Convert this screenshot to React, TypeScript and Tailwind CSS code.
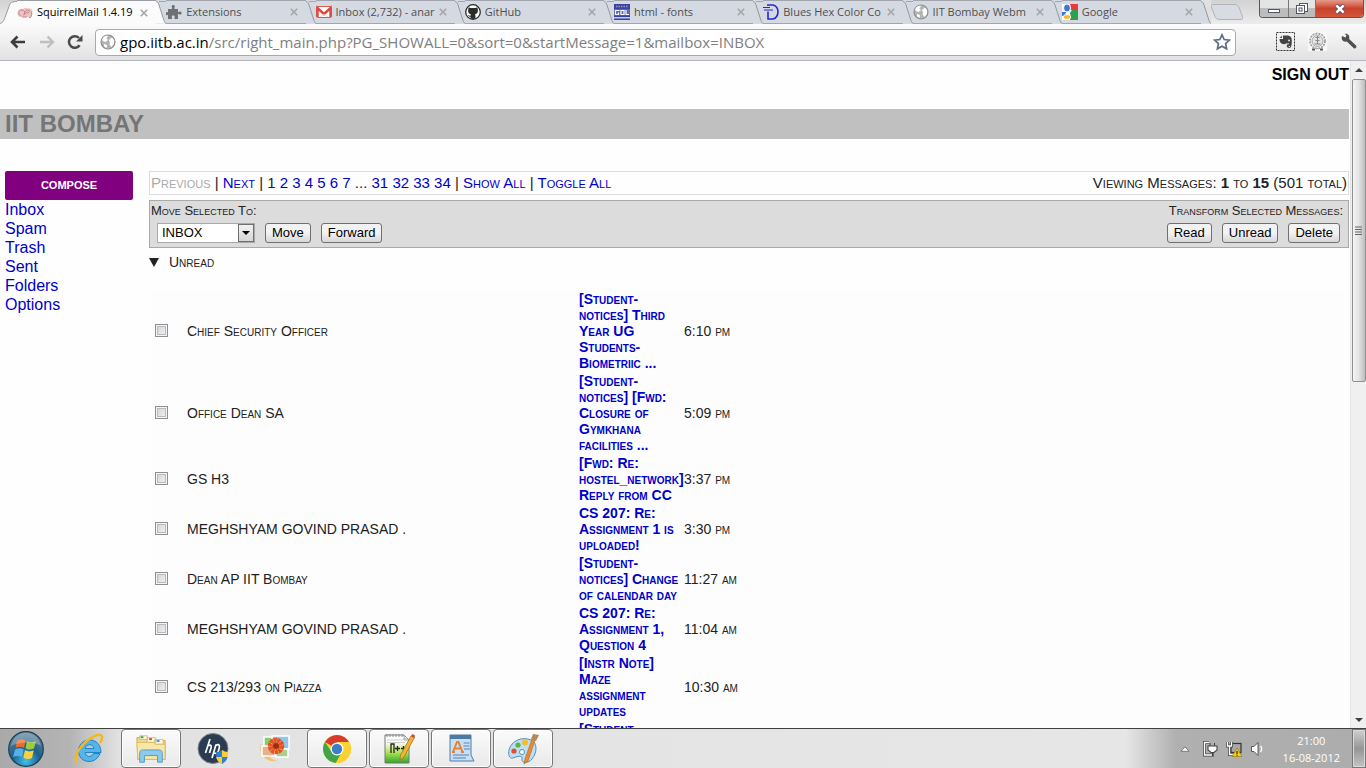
import React from "react";

type IconProps = { className?: string };

function SquirrelIcon() {
  return (
    <svg viewBox="0 0 16 16" className="size-4 shrink-0" aria-hidden="true">
      <path d="M0.500 8c0-3 2.500-5 6-4 1-1.500 3-1.500 4-.5 3-1 5 1 5 3.500s-1 4-2 5H3C1 11 .5 10 .5 8z" fill="#ecc3c4" />
      <path d="M4 11c-4-2-2-6 1-6s4 4 1 5M7.500 10c1-1-.5-3 1.500-4.500s4 0 3 1.500-3 1-3 0M12 12.500h1.500c1.500-2 1.500-4.500.5-6M5 12h5" fill="none" stroke="#c07f85" strokeWidth="0.900" />
    </svg>
  );
}

function PuzzleIcon() {
  return (
    <svg viewBox="0 0 16 16" className="size-4 shrink-0" fill="#6e7073" aria-hidden="true">
      <path d="M2 5h4V3.500C5 2 6 1 7.200 1S9.500 2 8.500 3.500V5H12v3h1c1-1.200 2.600-.5 2.600 1S14 11.200 13 10h-1v5H8.500v-1.500c.8-1.500-.3-2-1.300-2s-2 .6-1.200 2V15H2v-4H1.200C.4 12 0 11 0 9.500S.8 7.500 1.400 8.300H2z" />
    </svg>
  );
}

function GmailIcon() {
  return (
    <svg viewBox="0 0 16 16" className="size-4 shrink-0" aria-hidden="true">
      <rect x="0.500" y="2.500" width="15" height="11" rx="1" fill="#fff" stroke="#dd5a50" />
      <path d="M1.500 13V4L8 10l6.500-6v9" fill="none" stroke="#dc4b41" strokeWidth="2.400" />
      <path d="M4 13l4-3 4 3" fill="none" stroke="#ecc4c0" strokeWidth="0.800" />
    </svg>
  );
}

function GithubIcon() {
  return (
    <svg viewBox="0 0 16 16" className="size-4 shrink-0" aria-hidden="true">
      <circle cx="8" cy="8" r="7.300" fill="#fff" stroke="#2b2b2b" strokeWidth="1.300" />
      <path d="M3.500 3.200l2 .8h5l2-.8.4 3.500c0 2.400-1.400 3.300-3 3.600.7.700.6 2 .6 4.200-1 .5-4 .5-5 0v-1.700c-1.800.3-2-1.300-2.800-1.800 1.300-.3 1.500 1 2.800.8 0-.8.200-1.200.6-1.500-1.700-.3-3-1.200-3-3.600z" fill="#2b2b2b" />
    </svg>
  );
}

function GdlIcon() {
  return (
    <svg viewBox="0 0 16 16" className="size-4 shrink-0" aria-hidden="true">
      <path d="M0 0h16v16H0z" fill="#3a449c" />
      <path d="M0 5h16v6.500H0z" fill="#5d68b3" />
      <path d="M0 13h16v1.500H0z" fill="#c3c8ec" />
      <path d="M2 2.500h12" stroke="#8f98d6" strokeWidth="1.500" strokeDasharray="1.500 1" />
      <path d="M5.500 6.500h-4v4h3v-2M7 6.500h3v4H7zM12 6v4.500h3" fill="none" stroke="#fff" strokeWidth="1.200" />
    </svg>
  );
}

function DynamicIcon() {
  return (
    <svg viewBox="0 0 16 16" className="size-4 shrink-0" fill="none" stroke="#2424e0" aria-hidden="true">
      <path d="M4 1h6c4 1 5 4 5 7s-2 6.500-5 7H5V7.500" strokeWidth="1.600" />
      <path d="M0 3.500h7M1 6h9" strokeWidth="1.200" />
    </svg>
  );
}

function GlobeIcon() {
  return (
    <svg viewBox="0 0 16 16" className="size-4 shrink-0" aria-hidden="true">
      <circle cx="8" cy="8" r="7" fill="#b4b4b4" stroke="#8f8f8f" strokeWidth="1.200" />
      <path d="M3 3.500c2-2 4-2 5-1.500L6.500 4.500 8 6 5.500 8 4 7.500 2 6zM9 6l3-2.500 2 2.500v4l-2.500 3-2-2.500L10 9zM4 10l3 1-.5 3L4 12.500z" fill="#fff" />
    </svg>
  );
}

function GoogleIcon() {
  return (
    <svg viewBox="0 0 16 16" className="size-4 shrink-0" aria-hidden="true">
      <path d="M0 0h16v16H0z" fill="#fff" />
      <path d="M8 0h8v6H9z" fill="#ee3a32" />
      <path d="M10 6h6v10H8V9z" fill="#2f9e52" />
      <path d="M0 8h4v4H0z" fill="#3b78d8" />
      <ellipse cx="5" cy="4" rx="3.500" ry="4" fill="#3b78d8" stroke="#fff" />
      <path d="M5 8l4 3-3 1-3-2z" fill="#fff" />
      <ellipse cx="5" cy="13" rx="3.800" ry="2.500" fill="#f5b82e" stroke="#fff" />
    </svg>
  );
}

const tabs = [
  { title: "SquirrelMail 1.4.19", Icon: SquirrelIcon },
  { title: "Extensions", Icon: PuzzleIcon },
  { title: "Inbox (2,732) - anar", Icon: GmailIcon },
  { title: "GitHub", Icon: GithubIcon },
  { title: "html - fonts", Icon: GdlIcon },
  { title: "Blues Hex Color Co", Icon: DynamicIcon },
  { title: "IIT Bombay Webm", Icon: GlobeIcon },
  { title: "Google", Icon: GoogleIcon },
];

function TabStrip() {
  return (
    <div className="flex h-6 items-stretch bg-linear-to-b from-[#d2d2d2] to-[#ececec]">
      <svg viewBox="0 0 17 24" className="h-6 w-[17px] shrink-0" aria-hidden="true">
        <path d="M0 24c3-1 4-4 5-7l4-10c1-4 3-5 8-5v22z" fill="#fbfbfb" />
        <path d="M0 23.500c3-1 4-3 5-6l4-11c1-4 3-5 8-5" fill="none" stroke="#9a9da2" />
      </svg>
      <div role="tablist" className="flex min-w-0 max-w-[1194px] flex-1">
        {tabs.map(({ title, Icon }, i) => {
          const active = i === 0;
          const last = i === tabs.length - 1;
          return (
            <div key={title} className="flex min-w-0 flex-1 basis-0">
              <div
                className={
                  active
                    ? "flex min-w-0 flex-1 items-center border-t border-[#9a9da2] bg-[#fbfbfb] text-black"
                    : "flex min-w-0 flex-1 items-center border-y border-[#a0a5ae] bg-[#d5dae2] text-[#4e4e4e]"
                }
              >
                <button role="tab" aria-selected={active} className="flex min-w-0 flex-1 items-center gap-1">
                  <Icon />
                  <span className="text-left text-[11px] whitespace-nowrap">{title}</span>
                </button>
                <button aria-label={"Close " + title} className="mr-2 shrink-0">
                  <svg viewBox="0 0 8 8" className="size-2" stroke="#a3a5a9" strokeWidth="1.600" aria-hidden="true">
                    <path d="M0.800 0.800l6.400 6.400M7.200 0.800L0.800 7.200" />
                  </svg>
                </button>
              </div>
              <svg viewBox="0 0 10 24" className="h-6 w-2.5 shrink-0" aria-hidden="true">
                <path d="M0 0h10v24H0z" fill={last ? "#e0e0e0" : "#d5dae2"} />
                <path d="M0 1.500c2 .3 2.500 2 3 3.500l4.500 14c.5 2 1.500 4 2.500 4.500H0z" fill={active ? "#fbfbfb" : "#d5dae2"} />
                <path d="M0 1.500c2 .3 2.500 2 3 3.500l4.500 14c.5 2 1.500 4 2.500 4.500" fill="none" stroke="#94989f" />
                {!last && <path d="M3 1.500h7" stroke="#a0a5ae" />}
              </svg>
            </div>
          );
        })}
      </div>
      <button aria-label="New tab" className="mt-1 h-4 w-8 shrink-0">
        <svg viewBox="0 0 32 16" className="h-4 w-8" aria-hidden="true">
          <path d="M2 .5h22c2 0 3 1 4 3l3.500 9c.5 2 0 3-1.500 3H8c-2 0-3-1-4-3L.5 3C0 1.500.5.500 2 .5z" fill="#d8dce2" stroke="#b0b3b8" />
        </svg>
      </button>
      <div className="ml-auto mr-0.5 flex h-[18px] overflow-hidden rounded-b border border-t-0 border-[#55585f]">
        <button aria-label="Minimize" className="flex w-7 items-center justify-center bg-linear-to-b from-[#e4e4e4] from-50% to-[#bcbcbc] to-50%">
          <svg viewBox="0 0 14 14" className="size-3.5" aria-hidden="true">
            <rect x="1.500" y="7.500" width="11" height="3" fill="#fff" stroke="#50556a" />
          </svg>
        </button>
        <button aria-label="Restore" className="flex w-[27px] items-center justify-center border-l border-[#777] bg-linear-to-b from-[#e4e4e4] from-50% to-[#bcbcbc] to-50%">
          <svg viewBox="0 0 14 14" className="size-3.5" fill="#fff" stroke="#50556a" aria-hidden="true">
            <rect x="4.500" y="1.500" width="8" height="8" />
            <rect x="1.500" y="3.500" width="8" height="8" />
            <rect x="4" y="6" width="3" height="3" />
          </svg>
        </button>
        <button aria-label="Close window" className="flex w-12 items-center justify-center border-l border-[#777] bg-linear-to-b from-[#e59a8a] via-[#c9412b] to-[#d2563c]">
          <svg viewBox="0 0 14 14" className="size-3.5" aria-hidden="true">
            <path d="M3 3l8 8M11 3l-8 8" stroke="#5b4a60" strokeWidth="4.500" />
            <path d="M3.300 3.300l7.400 7.400M10.700 3.300l-7.400 7.400" stroke="#fff" strokeWidth="2.600" />
          </svg>
        </button>
      </div>
    </div>
  );
}

function AddressBar() {
  return (
    <div className="flex h-[37px] items-center border-b border-[#b3b6bf] bg-linear-to-b from-[#fbfbfb] to-[#e2e2e2] pl-2.5 pr-2">
      <button aria-label="Back">
        <svg viewBox="0 0 16 14" className="h-3.5 w-4" fill="none" stroke="#3d3d3d" strokeWidth="2.600" aria-hidden="true">
          <path d="M1.500 7H15M7.500 1.500L2 7l5.500 5.500" />
        </svg>
      </button>
      <button aria-label="Forward one page" className="ml-[13px]">
        <svg viewBox="0 0 16 14" className="h-3.5 w-4" fill="none" stroke="#bfbfbf" strokeWidth="2.400" aria-hidden="true">
          <path d="M14.500 7H1M8.500 1.500L14 7l-5.500 5.500" />
        </svg>
      </button>
      <button aria-label="Reload" className="ml-3">
        <svg viewBox="0 0 16 16" className="size-4" aria-hidden="true">
          <path d="M12.600 11.200A5.800 5.800 0 1 1 12 4" fill="none" stroke="#4a4a4a" strokeWidth="2.500" />
          <path d="M15.500 1v6.500H9z" fill="#4a4a4a" />
        </svg>
      </button>
      <div className="ml-3 flex h-[27px] min-w-0 flex-1 items-center rounded-sm border border-[#a9a9a9] bg-white px-1">
        <GlobeIcon />
        <div className="ml-1 min-w-0 flex-1 overflow-hidden text-[15px] whitespace-nowrap text-[#808080]">
          <span className="text-black">gpo.iitb.ac.in</span>/src/right_main.php?PG_SHOWALL=0&amp;sort=0&amp;startMessage=1&amp;mailbox=INBOX
        </div>
        <button aria-label="Bookmark this page">
          <svg viewBox="0 0 18 18" className="size-[18px]" aria-hidden="true">
            <path d="M9 1.800l2.200 4.700 5.200.6-3.800 3.500 1 5.200L9 13.200l-4.600 2.600 1-5.200L1.600 7.100l5.200-.6z" fill="#fff" stroke="#5d6b85" strokeWidth="1.700" />
          </svg>
        </button>
      </div>
      <button aria-label="Web clipper" className="ml-10">
        <svg viewBox="0 0 20 20" className="size-5" aria-hidden="true">
          <rect x="0.500" y="0.500" width="18" height="18" fill="none" stroke="#333" strokeDasharray="2 1" />
          <path d="M7 3.500h5c2 .3 3.800 1.500 3.800 5 0 4-.3 7.500-2.500 7.500-1.800 0-2.500-1-2.500-2.300 0-1 1-1.500 2.200-1.300v-1c-1.500-.5-2 .5-3 0-1 1.300-4.500.8-5.500-.8C3.800 9.500 3.500 8 3.500 7H7z" fill="#444" />
          <path d="M3.500 6l2.500-2.500V6z" fill="#555" />
          <path d="M12.800 14.500h1.200" stroke="#eee" />
          <circle cx="13" cy="8.500" r="0.900" fill="#eee" />
        </svg>
      </button>
      <button aria-label="IIT Bombay" className="ml-3">
        <svg viewBox="0 0 20 20" className="size-5" aria-hidden="true">
          <path d="M0 0h19v19H0z" fill="#f8f8f8" />
          <circle cx="9.500" cy="9" r="7.500" fill="none" stroke="#a0a0a0" strokeWidth="1.800" strokeDasharray="2 1" />
          <circle cx="9.500" cy="9" r="5.500" fill="#e2e2e2" stroke="#999" strokeWidth="0.800" />
          <path d="M7.500 5.500h4M9.500 4v8M7.500 8.500h4M6.500 12h6" stroke="#888" />
          <path d="M4 17.500h3M12 17.500h3" stroke="#555" strokeWidth="2" />
          <path d="M7 16.500h5" stroke="#aaa" />
        </svg>
      </button>
      <button aria-label="Customize" className="ml-3">
        <svg viewBox="0 0 18 18" className="size-[18px]" aria-hidden="true">
          <path d="M2 3l3.500 1.500L6.500 2 4.500 1C8 0 10 3 9.200 6l7 6.800c1 1.200-1 3.400-2.400 2.400l-7-6.800C3.500 9.500.800 7 2 3z" fill="#505050" />
        </svg>
      </button>
    </div>
  );
}

type Message = { from: string; subject: string[]; time: string };

const messages: Message[] = [
  { from: "Chief Security Officer", subject: ["[Student-", "notices] Third", "Year UG", "Students-", "Biometriic ..."], time: "6:10 pm" },
  { from: "Office Dean SA", subject: ["[Student-", "notices] [Fwd:", "Closure of", "Gymkhana", "facilities ..."], time: "5:09 pm" },
  { from: "GS H3", subject: ["[Fwd: Re:", "hostel_network]", "Reply from CC"], time: "3:37 pm" },
  { from: "MEGHSHYAM GOVIND PRASAD .", subject: ["CS 207: Re:", "Assignment 1 is", "uploaded!"], time: "3:30 pm" },
  { from: "Dean AP IIT Bombay", subject: ["[Student-", "notices] Change", "of calendar day"], time: "11:27 am" },
  { from: "MEGHSHYAM GOVIND PRASAD .", subject: ["CS 207: Re:", "Assignment 1,", "Question 4"], time: "11:04 am" },
  { from: "CS 213/293 on Piazza", subject: ["[Instr Note]", "Maze", "assignment", "updates"], time: "10:30 am" },
  { from: "", subject: ["[Student-", "notices]", "..."], time: "" },
];

const folders = ["Inbox", "Spam", "Trash", "Sent", "Folders", "Options"];

function PageLink({ children }: { children: React.ReactNode }) {
  return (
    <a href="#" className="text-[#0000cc]">
      {children}
    </a>
  );
}

function FormButton({ children }: { children: React.ReactNode }) {
  return (
    <button className="h-5 rounded-[3px] border border-[#707070] bg-linear-to-b from-[#f2f2f2] from-50% to-[#d6d6d6] px-1.5 text-[13px] leading-[18px] text-black">
      {children}
    </button>
  );
}

function Pager() {
  return (
    <nav className="flex h-6 items-center justify-between border border-[#dcdcdc] px-px text-[15px] leading-5 [font-variant-caps:small-caps]">
      <div>
        <span className="text-[#aaaaaa]">Previous</span> | <PageLink>Next</PageLink> | 1{" "}
        {["2", "3", "4", "5", "6", "7"].map((n) => (
          <React.Fragment key={n}>
            <PageLink>{n}</PageLink>{" "}
          </React.Fragment>
        ))}
        ...{" "}
        {["31", "32", "33", "34"].map((n) => (
          <React.Fragment key={n}>
            <PageLink>{n}</PageLink>{" "}
          </React.Fragment>
        ))}
        | <PageLink>Show All</PageLink> | <PageLink>Toggle All</PageLink>
      </div>
      <div>
        Viewing Messages: <b>1</b> to <b>15</b> (501 total)
      </div>
    </nav>
  );
}

function MessageToolbar() {
  return (
    <div className="mt-[5px] flex h-12 justify-between border border-[#a9a9a9] bg-[#dcdcdc] px-px pt-px">
      <div>
        <label htmlFor="target" className="block text-[13px] leading-[18px] [font-variant-caps:small-caps]">
          Move Selected To:
        </label>
        <div className="mt-[3px] flex gap-2.5 pl-1.5">
          <div className="relative flex h-5 w-[98px]">
            <select id="target" className="w-full appearance-none border border-[#a9a9a9] bg-white pl-1 text-[13px] leading-[18px] text-black">
              <option>INBOX</option>
            </select>
            <span className="pointer-events-none absolute inset-y-px right-px flex w-4 items-center justify-center border border-[#707070] bg-linear-to-b from-[#f2f2f2] to-[#d6d6d6]">
              <svg viewBox="0 0 8 4" className="h-1 w-2" aria-hidden="true">
                <path d="M0 0h8L4 4z" fill="#000" />
              </svg>
            </span>
          </div>
          <FormButton>Move</FormButton>
          <FormButton>Forward</FormButton>
        </div>
      </div>
      <div>
        <div className="pr-1 text-right text-[13px] leading-[18px] [font-variant-caps:small-caps]">Transform Selected Messages:</div>
        <div className="mt-[3px] flex justify-end gap-2.5 pr-[7px]">
          <FormButton>Read</FormButton>
          <FormButton>Unread</FormButton>
          <FormButton>Delete</FormButton>
        </div>
      </div>
    </div>
  );
}

function MessageTable() {
  return (
    <table className="mt-[18px] w-full table-fixed border-separate border-spacing-0.5 text-sm leading-4 [font-variant-caps:small-caps]">
      <colgroup>
        <col className="w-6" />
        <col className="w-[400px]" />
        <col className="w-[103px]" />
        <col />
      </colgroup>
      <tbody>
        {messages.map((m, i) => (
          <tr key={i} className="bg-[#fdfdfd]">
            <td className="p-0 pb-0.5 pl-1 align-middle">
              <input
                type="checkbox"
                aria-label={"Select message from " + m.from}
                className="block size-[13px] appearance-none border border-[#8e8f8f] bg-linear-to-br from-[#cdd0d4] to-[#f6f6f6] shadow-[inset_0_0_0_1px_#f4f4f4,inset_0_0_0_2px_#b8bcc0]"
              />
            </td>
            <td className="p-0 pl-2.5 align-middle">{m.from}</td>
            <td className="p-0 align-middle">
              <a href="#" className="font-bold whitespace-nowrap text-[#0000cc]">
                {m.subject.map((line) => (
                  <span key={line} className="block">
                    {line}
                  </span>
                ))}
              </a>
            </td>
            <td className="p-0 align-middle">{m.time}</td>
          </tr>
        ))}
      </tbody>
    </table>
  );
}

function Scrollbar() {
  return (
    <div className="flex w-4 shrink-0 flex-col items-center border-l border-[#e3e3e3] bg-[#f0f0f0]">
      <svg viewBox="0 0 8 4" className="mt-[7px] h-1 w-2 shrink-0" aria-hidden="true">
        <path d="M4 0l4 4H0z" fill="#404040" />
      </svg>
      <div className="mt-[7px] flex h-[303px] w-3.5 shrink-0 items-center justify-center rounded-xs border border-[#8f8f8f] bg-linear-to-r from-[#f5f5f5] via-[#e2e2e2] to-[#bdbdbd]">
        <svg viewBox="0 0 8 9" className="h-[9px] w-2" aria-hidden="true">
          <path d="M0 1h7M0 3.500h7M0 6h7M0 8.500h7" stroke="#666" />
        </svg>
      </div>
      <svg viewBox="0 0 8 4" className="mt-auto mb-1.5 h-1 w-2 shrink-0" aria-hidden="true">
        <path d="M0 0h8L4 4z" fill="#404040" />
      </svg>
    </div>
  );
}

function StartOrb({ className }: IconProps) {
  return (
    <svg viewBox="0 0 36 36" className={className} aria-hidden="true">
      <defs>
        <radialGradient id="orb" cx="50%" cy="85%" r="80%">
          <stop offset="0" stopColor="#3fc3ea" />
          <stop offset="0.500" stopColor="#1d5f8e" />
          <stop offset="1" stopColor="#5f8199" />
        </radialGradient>
      </defs>
      <circle cx="18" cy="18" r="17.300" fill="url(#orb)" stroke="#1f3f52" strokeWidth="1.200" />
      <path d="M9 9.500c3-2 6-1.500 8.500 0L16 17c-3-2-6-1.500-8.500 0z" fill="#ee6a2c" />
      <path d="M19 10c3 2 6 1.500 9 0l-2 7.500c-3 1.500-6 1.500-8.500-.5z" fill="#9ccb3c" />
      <path d="M7 18.500c3-1.500 6-2 8.600 0L14 26c-3-1.500-6-1.500-9 0z" fill="#55b1e8" />
      <path d="M17 19c3 2 6 1.800 8.700.3L24 27c-3 1.500-6 1.300-8.600-.5z" fill="#fbd23c" />
      <path d="M3 15C5 5 13 1.500 18 1.500S31 5 33 15C25 10 12 11 3 15z" fill="#fff" opacity="0.250" />
    </svg>
  );
}

function ExplorerEIcon({ className }: IconProps) {
  return (
    <svg viewBox="0 0 32 32" className={className} aria-hidden="true">
      <path d="M27 20.500c-2 5-6 8-11 8-6 0-10.500-4.500-10.500-10.500S10 7 16.500 7 28 11.500 28 19.500H12c.5 4 6 6 8.500 1zM12 15.500h9c-.5-5-8-5-9 0z" fill="#53b5ea" stroke="#2183c4" />
      <path d="M4 29C-1 25 8 11 18 5s14-3 9 5" fill="none" stroke="#f2b91d" strokeWidth="2.400" />
    </svg>
  );
}

function FolderIcon({ className }: IconProps) {
  return (
    <svg viewBox="0 0 34 32" className={className} aria-hidden="true">
      <path d="M2 4h10l1 3h19v20H3z" fill="#f3dc8b" stroke="#c9a94a" />
      <path d="M5 2h8v4H5zM13 4h9v5h-9zM21 6h9v5h-9z" fill="#fff8dd" stroke="#d5bc6c" />
      <path d="M6 3.500h3" stroke="#2da94b" strokeWidth="2" />
      <path d="M15 5.500h3" stroke="#d8433a" strokeWidth="2" />
      <path d="M23 7.500h3" stroke="#379be0" strokeWidth="2" />
      <path d="M2 9h18l2 2h10v16H3z" fill="#f8e7a6" stroke="#d5bc6c" />
      <path d="M5 30v-9c0-3 1-4 4-4h16c3 0 4 1 4 4v9h-5v-7H10v7z" fill="#8ccbeb" stroke="#5598c4" />
    </svg>
  );
}

function HpIcon({ className }: IconProps) {
  return (
    <svg viewBox="0 0 32 32" className={className} aria-hidden="true">
      <circle cx="16" cy="15.500" r="15" fill="#2b3c50" stroke="#75828f" />
      <path d="M13 6L8.500 20M10.500 13c4-2 4 0 3.500 2l-1.500 5M19 11.500L15 25M18.500 12.500c4-2 4.500 0 3.500 3.500-1 4-2 5-5 4" fill="none" stroke="#fff" strokeWidth="1.700" />
      <path d="M19 19c3 0 4-1 6-2 2 1 3 2 6 2 0 6-1 9-6 12-5-3-6-6-6-12z" fill="#2f7fd0" />
      <path d="M25 17c2 1 3 2 6 2v5h-6zM19 24h6v7c-4-2-5-4-6-7z" fill="#f5cf35" />
    </svg>
  );
}

function PhotosIcon({ className }: IconProps) {
  return (
    <svg viewBox="0 0 32 32" className={className} aria-hidden="true">
      <path d="M2 11c-3 9 4 19 17 17-7-1-12-6-13-14z" fill="#f9bf6b" />
      <path d="M5 4h20v12H5z" fill="#8acb6b" stroke="#fff" strokeWidth="1.500" />
      <path d="M13 3h17v13H13z" fill="#8fc6ea" stroke="#fff" strokeWidth="1.500" />
      <path d="M3 13h13v10H3z" fill="#e8b18c" stroke="#fff" strokeWidth="1.500" />
      <path d="M17 16h12v8H17z" fill="#a9cf8f" stroke="#fff" strokeWidth="1.500" />
      <circle cx="17" cy="13" r="5.500" fill="none" stroke="#e8501c" strokeWidth="5.500" strokeDasharray="2.900 0.400" />
      <circle cx="17" cy="13" r="3" fill="#9e2d10" />
    </svg>
  );
}

function ChromeIcon({ className }: IconProps) {
  return (
    <svg viewBox="0 0 32 32" className={className} aria-hidden="true">
      <circle cx="16" cy="16" r="14" fill="#fbd22f" />
      <path d="M16 16L3.900 9a14 14 0 0 1 24.200 0z" fill="#d93c2f" />
      <path d="M3.900 9a14 14 0 0 0 11 21l5.500-10L10 18z" fill="#3fa548" />
      <path d="M16 9h12.100a14 14 0 0 1-13.200 21l6-11z" fill="#fbd22f" />
      <circle cx="16" cy="16" r="6.500" fill="#fff" />
      <circle cx="16" cy="16" r="5.200" fill="#3b7fc9" />
    </svg>
  );
}

function NotepadIcon({ className }: IconProps) {
  return (
    <svg viewBox="0 0 32 32" className={className} aria-hidden="true">
      <defs>
        <linearGradient id="page" x1="0" y1="0" x2="0" y2="1">
          <stop offset="0.250" stopColor="#ffffff" />
          <stop offset="0.600" stopColor="#b4e65a" />
          <stop offset="1" stopColor="#2fa823" />
        </linearGradient>
      </defs>
      <path d="M2 2h19l5 5v23H2z" fill="url(#page)" stroke="#777" />
      <path d="M21 2v5h5z" fill="#ddd" stroke="#888" strokeWidth="0.700" />
      <path d="M4 1v3M7 1v3M10 1v3M13 1v3M16 1v3M19 1v3" stroke="#888" />
      <path d="M4 7h16M4 9.500h18" stroke="#ccc" />
      <path d="M8 20v-9h3v9M14.500 13v5M12 15.500h5M20.500 13v5M18 15.500h5" fill="none" stroke="#222" strokeWidth="1.300" />
      <path d="M28 3l3.500 1.500L21 24l-4 3 .5-5z" fill="#f2b53a" stroke="#a8701c" strokeWidth="0.800" />
      <path d="M28 3l3.500 2 .5-2.500L29.500 1z" fill="#c84a3a" />
    </svg>
  );
}

function WordpadIcon({ className }: IconProps) {
  return (
    <svg viewBox="0 0 32 32" className={className} aria-hidden="true">
      <path d="M5 2h21v20l3 6H5z" fill="#c8dff4" stroke="#4f7ea8" />
      <path d="M5 2h21v4H5z" fill="#4b7ba4" />
      <path d="M8 19l4-10h1.500l4 10M10 15.500h6M7 19h3M16 19h3" fill="none" stroke="#ee8127" strokeWidth="1.900" />
      <path d="M18.500 10h6M18.500 13h6M19 16h6M8 22h16M8 25h13" stroke="#4f82be" strokeWidth="1.100" />
    </svg>
  );
}

function PaintIcon({ className }: IconProps) {
  return (
    <svg viewBox="0 0 32 32" className={className} aria-hidden="true">
      <path d="M2 17C4 8 15 3 24 7c7 3 6 13 1 19-4 5-11 4-10 0s-4-3-9-1c-4 1-5-4-4-8z" fill="#bcdff1" stroke="#4e93b7" />
      <circle cx="7" cy="18" r="2.600" fill="#e04d37" />
      <circle cx="11" cy="12" r="2.600" fill="#59b545" />
      <circle cx="18" cy="9.500" r="3" fill="#f3bd2f" />
      <circle cx="15" cy="19" r="2.500" fill="#fff" stroke="#4e93b7" />
      <path d="M28 7l-7 21-4 3 1-5 7-20z" fill="#ee8b32" stroke="#b4601c" strokeWidth="0.600" />
      <path d="M24 6l2-5 6 1-3 6z" fill="#b08a5c" />
    </svg>
  );
}

const apps = [
  { name: "Internet Explorer", Icon: ExplorerEIcon, open: false },
  { name: "Windows Explorer", Icon: FolderIcon, open: true },
  { name: "HP Support", Icon: HpIcon, open: false },
  { name: "Photos", Icon: PhotosIcon, open: false },
  { name: "Chrome", Icon: ChromeIcon, open: true },
  { name: "Notepad++", Icon: NotepadIcon, open: true },
  { name: "WordPad", Icon: WordpadIcon, open: true },
  { name: "Paint", Icon: PaintIcon, open: true },
];

function Taskbar() {
  return (
    <footer className="flex h-10 shrink-0 border-t border-[#404040] bg-[linear-gradient(to_right,#a9a9a9_0,#b4b4b4_70px,#e2e2e2_120px,#e6e6e6_calc(100%-240px),#b0b0b0_calc(100%-190px),#acacac_100%)]">
      <button aria-label="Start" className="ml-2 flex items-center">
        <StartOrb className="size-9" />
      </button>
      <div className="ml-[15px] flex gap-0.5">
        {apps.map(({ name, Icon, open }) => (
          <button
            key={name}
            aria-label={name}
            className={
              open
                ? "flex w-15 items-center justify-center rounded-sm border border-[#777] bg-linear-to-b from-[#fbfbfb] to-[#e9e9e9] shadow-[inset_0_0_0_1px_#ffffff]"
                : "flex w-15 items-center justify-center"
            }
          >
            <Icon className="size-8" />
          </button>
        ))}
      </div>
      <div className="ml-auto flex items-center">
        <button aria-label="Show hidden icons">
          <svg viewBox="0 0 10 6" className="h-1.5 w-2.5" aria-hidden="true">
            <path d="M5 .8L9 5.300H1z" fill="#fff" stroke="#666" strokeWidth="0.800" />
          </svg>
        </button>
        <svg viewBox="0 0 16 16" className="ml-3 size-4" aria-hidden="true">
          <path d="M7 1.500H2.500v12.500h8v-3" fill="none" stroke="#444" strokeWidth="3" />
          <path d="M7 1.500H2.500v12.500h8v-3" fill="none" stroke="#fff" strokeWidth="1.400" />
          <path d="M6 5h9v4l-3 2.500H9L6 9zM8 2v3M12.500 2v3M10.500 11v4" fill="#fff" stroke="#444" strokeWidth="1.100" />
        </svg>
        <svg viewBox="0 0 16 16" className="ml-2 size-4" aria-hidden="true">
          <rect x="5" y="2.500" width="10" height="9" fill="#a8a8a8" stroke="#333" strokeWidth="1.200" />
          <path d="M1.500 1v4h4V1M3.500 5v8.500H7" fill="none" stroke="#444" strokeWidth="2.800" />
          <path d="M1.500 1v4h4V1M3.500 5v8.500H7" fill="none" stroke="#fff" strokeWidth="1.300" />
          <path d="M11 7l5 8.500H6z" fill="#f5cd22" stroke="#8c7400" strokeWidth="0.600" />
          <path d="M11 10v3M11 13.800v1" stroke="#222" strokeWidth="1.200" />
        </svg>
        <svg viewBox="0 0 16 16" className="ml-2 size-4" aria-hidden="true">
          <path d="M1.500 5.500H4L8 1.500v13l-4-4H1.500z" fill="#fff" stroke="#555" />
          <path d="M10.500 5c1.500 1.500 1.500 4.500 0 6" fill="none" stroke="#fff" strokeWidth="1.400" />
        </svg>
        <div className="mr-3 ml-[17px] text-center text-[11px] leading-[17px] text-white">
          <div>21:00</div>
          <div>16-08-2012</div>
        </div>
        <button aria-label="Show desktop" className="h-full w-3.5 border border-[#777] bg-linear-to-b from-[#d0d0d0] via-[#969696] to-[#c4c4c4] shadow-[inset_0_0_0_1px_#d8d8d8]" />
      </div>
    </footer>
  );
}

export default function App() {
  return (
    <div className="flex h-screen flex-col overflow-hidden bg-white font-['Open_Sans','Noto_Sans',sans-serif]">
      <header className="shrink-0">
        <TabStrip />
        <AddressBar />
      </header>
      <div className="flex min-h-0 flex-1 font-['Liberation_Sans',Arial,sans-serif] text-[#222222]">
        <main className="min-w-0 flex-1 overflow-hidden bg-[#fefefe] pr-px">
          <div className="pt-1 text-right text-base leading-[19px] font-bold">
            <a href="#" className="text-black">
              SIGN OUT
            </a>
          </div>
          <h1 className="mt-[25px] bg-[#c0c0c0] pl-[5px] text-2xl leading-[30px] font-bold text-[#757575]">IIT BOMBAY</h1>
          <div className="mt-8 flex gap-4">
            <aside className="flex w-[133px] shrink-0 flex-col pl-[5px] text-base leading-[19px]">
              <button className="h-[29px] rounded-xs bg-[#800080] text-[11px] font-bold text-white">COMPOSE</button>
              {folders.map((f) => (
                <PageLink key={f}>{f}</PageLink>
              ))}
            </aside>
            <section className="min-w-0 flex-1">
              <Pager />
              <MessageToolbar />
              <h2 className="mt-[5px] flex items-center gap-2.5 text-sm leading-[18px] [font-variant-caps:small-caps]">
                <svg viewBox="0 0 10 9" className="h-[9px] w-2.5" aria-hidden="true">
                  <path d="M0 0h10L5 9z" fill="#222" />
                </svg>
                Unread
              </h2>
              <MessageTable />
            </section>
          </div>
        </main>
        <Scrollbar />
      </div>
      <Taskbar />
    </div>
  );
}
